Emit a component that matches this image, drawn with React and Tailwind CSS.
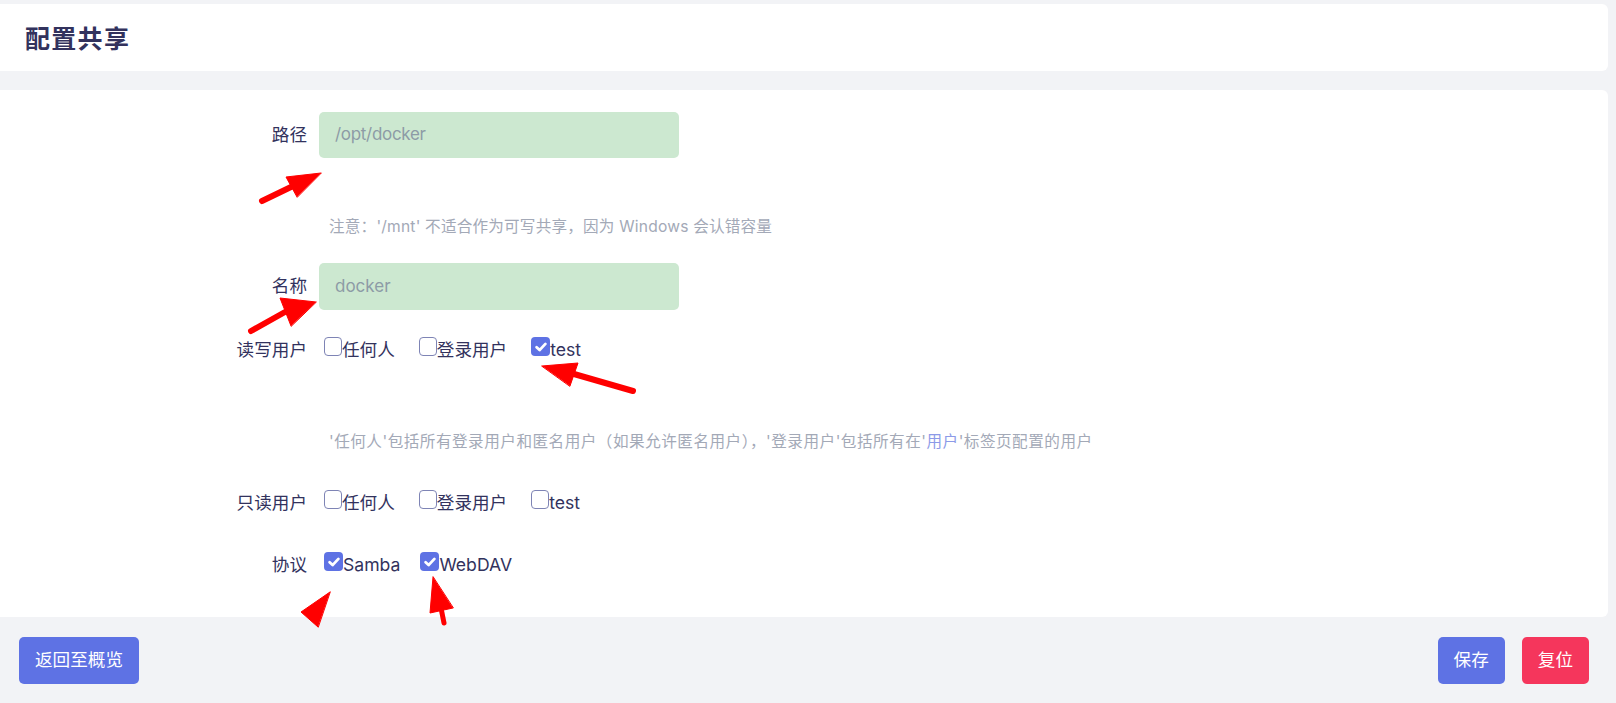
import React from 'react'

function Box({ checked, label, gap = 'mr-[23px]' }) {
    return (
        <label className={'flex items-start ' + gap}>
            {checked ? (
                <span className="w-[19px] h-[19px] rounded-[4px] bg-[#5e72e4] flex items-center justify-center">
                    <svg width="14" height="14" viewBox="0 0 14 14">
                        <path d="M2.6 7.3l3 2.8 5.8-6.2" fill="none" stroke="#fff" strokeWidth="2.8" strokeLinecap="round" strokeLinejoin="round" />
                    </svg>
                </span>
            ) : (
                <span className="w-[18px] h-[19px] rounded-[4px] border border-[#7e84b5] bg-white" />
            )}
            <span className="leading-[27px] -mt-[1px]">{label}</span>
        </label>
    )
}

function Row({ label, children, className = '' }) {
    return (
        <div className={'flex items-start ' + className}>
            <div className="w-[307px] text-right leading-[26px] shrink-0">{label}</div>
            <div className="pl-[12px] flex-1">{children}</div>
        </div>
    )
}

export default function App() {
    return (
        <div className="relative h-[703px] overflow-hidden bg-[#f2f3f6] pt-[4px] pr-[8px] text-[17.6px] text-[#32325d] font-['Inter','Noto_Sans_CJK_SC',sans-serif]">
            <div className="h-[67px] bg-white rounded-r-[6px] flex items-center px-[25px]">
                <h1 className="text-[25px] font-bold text-[#32325d] font-['Noto_Sans_CJK_SC',sans-serif] tracking-[1.3px]">配置共享</h1>
            </div>

            <div className="mt-[19px] h-[527px] bg-white rounded-r-[6px] pt-[22px]">
                <div className="flex items-center">
                    <div className="w-[307px] text-right shrink-0">路径</div>
                    <div className="ml-[12px] w-[360px] h-[46px] bg-[#cce8d0] rounded-[5px] flex items-center px-[16px] text-[#8d9ba6] text-[17px] tracking-[-0.3px]">/opt/docker</div>
                </div>
                <div className="pl-[329px] mt-[58px] leading-[22px] text-[15.6px] tracking-[0.2px] text-[#a3a9b7]">
                    注意：'/mnt' 不适合作为可写共享，因为 Windows 会认错容量
                </div>
                <div className="flex items-center mt-[25px]">
                    <div className="w-[307px] text-right shrink-0">名称</div>
                    <div className="ml-[12px] w-[360px] h-[47px] bg-[#cce8d0] rounded-[5px] flex items-center px-[16px] text-[#8d9ba6] text-[17px]">docker</div>
                </div>

                <Row label="读写用户" className="mt-[27px]">
                    <div className="flex pl-[5px]">
                        <Box label="任何人" gap="mr-[24px]" />
                        <Box label="登录用户" gap="mr-[24px]" />
                        <Box checked label="test" />
                    </div>
                </Row>

                <div className="pl-[329px] mt-[68px] leading-[22px] text-[15.6px] tracking-[0.5px] text-[#a3a9b7]">
                    '任何人'包括所有登录用户和匿名用户（如果允许匿名用户），'登录用户'包括所有在'<span className="text-[#8c9ae8]">用户</span>'标签页配置的用户
                </div>

                <Row label="只读用户" className="mt-[37px]">
                    <div className="flex pl-[5px]">
                        <Box label="任何人" gap="mr-[24px]" />
                        <Box label="登录用户" gap="mr-[24px]" />
                        <Box label="test" />
                    </div>
                </Row>

                <Row label="协议" className="mt-[36px]">
                    <div className="flex pl-[5px]">
                        <Box checked label="Samba" gap="mr-[20px]" />
                        <Box checked label="WebDAV" />
                    </div>
                </Row>
            </div>

            <div className="flex justify-between px-[19px] mt-[20px]">
                <button className="h-[47px] px-[16px] rounded-[5px] bg-[#5e72e4] text-white">返回至概览</button>
                <div className="flex gap-[17px]">
                    <button className="h-[47px] px-[16px] rounded-[5px] bg-[#5e72e4] text-white">保存</button>
                    <button className="h-[47px] px-[16px] rounded-[5px] bg-[#f5365c] text-white">复位</button>
                </div>
            </div>

            <svg className="absolute left-0 top-0 pointer-events-none" width="1616" height="703" viewBox="0 0 1616 703">
                <g fill="#ff0000" stroke="#ff0000" strokeLinecap="round" strokeLinejoin="round">
                    <line x1="262" y1="201" x2="291" y2="187" strokeWidth="6" />
                    <polygon points="321,173 286,177 297,197" strokeWidth="1" />
                    <line x1="251" y1="331" x2="285" y2="312" strokeWidth="6" />
                    <polygon points="316,302 280,298 291,326" strokeWidth="1" />
                    <line x1="633" y1="391" x2="574" y2="374" strokeWidth="6" />
                    <polygon points="542,366 578,363 570,386" strokeWidth="1" />
                    <polygon points="330,592 301,612 318,627" strokeWidth="1" />
                    <line x1="441" y1="608" x2="444" y2="623" strokeWidth="5" />
                    <polygon points="433,577 430,613 453,608" strokeWidth="1" />
                </g>
            </svg>
        </div>
    )
}
